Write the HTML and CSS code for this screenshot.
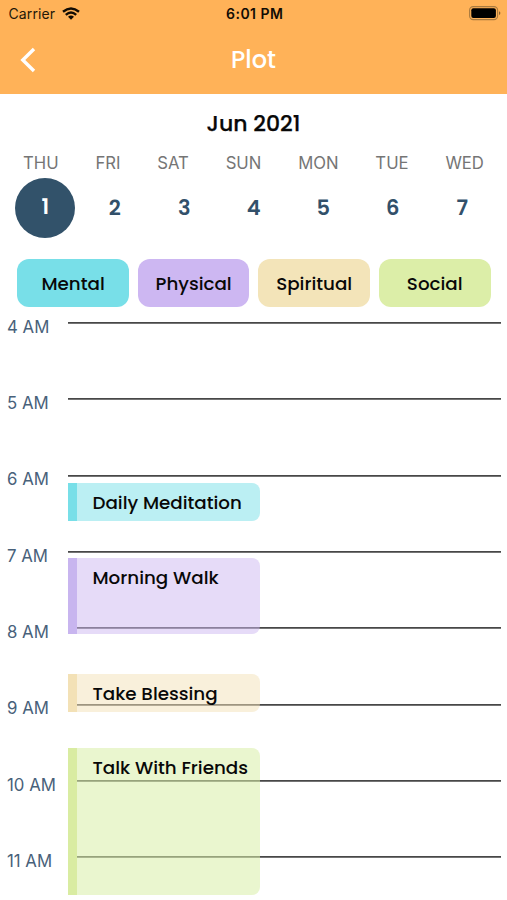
FILE: index.html
```html
<!DOCTYPE html>
<html lang="en">
<head>
<meta charset="utf-8">
<title>Plot</title>
<link rel="stylesheet" href="styles.css">
</head>
<body>
<header class="header">
  <div class="status">
    <div class="carrier"><span>Carrier</span>
      <svg class="wifi" width="18" height="13" viewBox="0 0 18 13"><g fill="none" stroke="#120c04" stroke-width="2.4"><path d="M1 4.7Q9-1.8 17 4.7"/><path d="M3.8 7.8Q9 3.3 14.2 7.8"/></g><path d="M6 9.7Q9 7.2 12 9.7L9 12.8Z" fill="#120c04"/></svg>
    </div>
    <div class="time">6:01 PM</div>
    <svg class="battery" width="32" height="15" viewBox="0 0 32 15"><rect x=".6" y=".6" width="28" height="13" rx="3.6" fill="none" stroke="#a97a3f" stroke-width="1.1"/><rect x="2.3" y="2.3" width="24.6" height="9.6" rx="2" fill="#000"/><path d="M30 5.2Q31.4 5.8 31.4 7.1T30 9Z" fill="#8d6331"/></svg>
  </div>
  <div class="nav">
    <svg class="back" width="16" height="26" viewBox="0 0 16 26"><path d="M14 2L2.8 13L14 24" fill="none" stroke="#fff" stroke-width="3.4"/></svg>
    <h1 class="title">Plot</h1>
  </div>
</header>
<main>
  <h2 class="month">Jun 2021</h2>
  <div class="weekdays"><span>THU</span><span>FRI</span><span>SAT</span><span>SUN</span><span>MON</span><span>TUE</span><span>WED</span></div>
  <div class="dates"><span class="selected">1</span><span>2</span><span>3</span><span>4</span><span>5</span><span>6</span><span>7</span></div>
  <div class="chips">
    <div class="chip mental">Mental</div>
    <div class="chip physical">Physical</div>
    <div class="chip spiritual">Spiritual</div>
    <div class="chip social">Social</div>
  </div>
  <div class="schedule">
    <div class="hour"><span>4 AM</span><i></i></div>
    <div class="hour"><span>5 AM</span><i></i></div>
    <div class="hour"><span>6 AM</span><i></i></div>
    <div class="hour"><span>7 AM</span><i></i></div>
    <div class="hour"><span>8 AM</span><i></i></div>
    <div class="hour"><span>9 AM</span><i></i></div>
    <div class="hour"><span>10 AM</span><i></i></div>
    <div class="hour"><span>11 AM</span><i></i></div>
    <div class="event meditation"><span>Daily Meditation</span></div>
    <div class="event walk"><span>Morning Walk</span></div>
    <div class="event blessing"><span>Take Blessing</span></div>
    <div class="event friends"><span>Talk With Friends</span></div>
  </div>
</main>
</body>
</html>
```
FILE: styles.css
```css
* { box-sizing: border-box; }
body {
  margin: 0;
  height: 900px;
  overflow: hidden;
  background: #fff;
  color: #080808;
  font-family: Poppins, Inter, "Liberation Sans", sans-serif;
}
.header { height: 94px; background: #ffb258; }
.status {
  display: grid;
  grid-template-columns: 1fr auto 1fr;
  align-items: center;
  height: 27px;
  padding: 0 6px 0 8.5px;
  color: #241808;
  font-family: Inter, sans-serif;
  font-size: 14px;
}
.carrier { display: flex; align-items: center; gap: 7px; letter-spacing: .1px; }
.time { color: #120c04; font-weight: 600; letter-spacing: .5px; }
.battery { justify-self: end; }
.nav {
  display: grid;
  grid-template-columns: 40px 1fr 40px;
  align-items: center;
  height: 65px;
  padding: 0 20px;
}
.title {
  margin: 0;
  padding-top: 1px;
  text-align: center;
  color: #fff;
  font-size: 24px;
  font-weight: 500;
  line-height: 36px;
}
.month {
  margin: 0;
  padding-top: 13px;
  text-align: center;
  font-size: 22px;
  line-height: 34px;
  font-weight: 500;
  -webkit-text-stroke: .25px;
}
.weekdays {
  display: flex;
  justify-content: space-between;
  padding: 10px 23px 0;
  color: #757575;
  font: 16.7px/24px Inter, sans-serif;
}
.dates {
  display: grid;
  grid-template-columns: repeat(7, 69.5px);
  justify-items: center;
  align-items: center;
  height: 60px;
  margin: 3px 0 0 10.5px;
  color: #32506a;
  font-size: 21px;
  font-weight: 600;
}
.dates span { line-height: 58px; }
.selected {
  width: 60px;
  height: 60px;
  border-radius: 50%;
  background: #32526a;
  color: #fff;
  text-align: center;
}
.chips {
  display: grid;
  grid-template-columns: repeat(4, 1fr);
  gap: 9px;
  height: 48.5px;
  margin: 20.8px 16.5px 0 17.3px;
  font-size: 18.3px;
  font-weight: 500;
}
.chip { display: flex; align-items: center; justify-content: center; border-radius: 12px; }
.mental { background: #78dfe8; }
.physical { background: #cdb7f2; }
.spiritual { background: #f3e4b9; }
.social { background: #dceea8; }
.schedule { position: relative; padding: 14.7px 6px 0 7px; }
.hour {
  display: grid;
  grid-template-columns: 61px 1fr;
  height: 76.33px;
  color: #48617a;
  font: 16.8px/24px Inter, sans-serif;
}
.hour span { margin-top: -7.3px; }
.hour i { height: 2px; background: linear-gradient(#484848 50%, #747474 50%); }
.event {
  position: absolute;
  left: 68px;
  width: 192px;
  border-left: 9px solid;
  border-radius: 0 8px 8px 0;
  padding: 7px 0 0 15.5px;
  font-size: 18.3px;
  line-height: 25px;
  font-weight: 500;
  white-space: nowrap;
}
.event span { color: #080808; }
.meditation { top: 175.5px; height: 38px; border-color: #78dfe8; background: rgba(120, 223, 232, .5) padding-box; }
.walk { top: 250.5px; height: 76px; border-color: #c8b5ef; background: rgba(205, 183, 242, .5) padding-box; }
.blessing { top: 366.5px; height: 38px; border-color: #f3e1b6; background: rgba(243, 225, 184, .5) padding-box; }
.friends { top: 440.5px; height: 147px; border-color: #d9eca2; background: rgba(217, 238, 168, .55) padding-box; }
```
